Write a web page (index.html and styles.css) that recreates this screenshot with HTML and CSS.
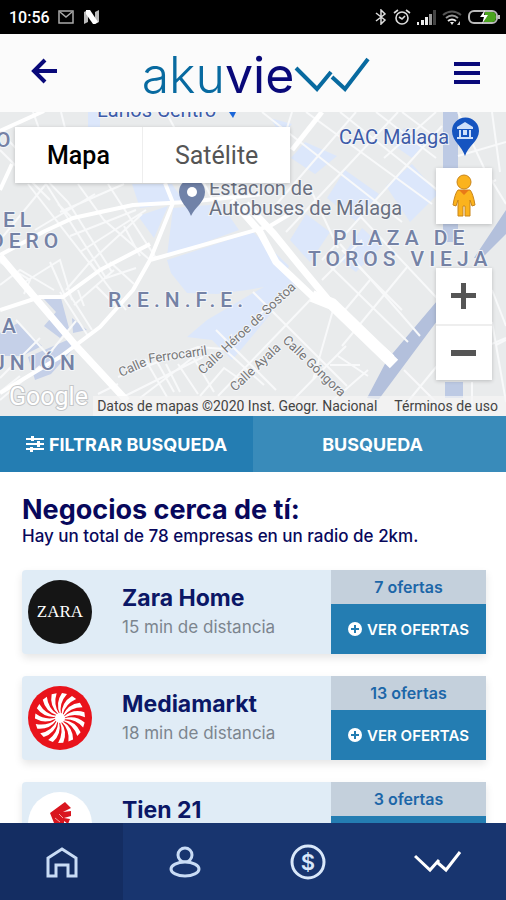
FILE: index.html
```html
<!DOCTYPE html>
<html lang="es">
<head>
    <meta charset="UTF-8">
    <meta name="viewport" content="width=device-width, initial-scale=1.0">
    <title>Akuview</title>
    <link rel="stylesheet" href="styles.css">
</head>
<body>

    <div class="status-bar">
        <span class="time">10:56</span>
        <svg width="16" height="14" viewBox="0 0 16 14" fill="none" stroke="#aaa" stroke-width="1.5"><rect x="1" y="1" width="14" height="12"/><path d="M2 2l6 5 6-5"/></svg>
        <svg class="n-icon" width="17" height="14" viewBox="0 0 17 14"><path d="M1 2l4-2v12l-4 2z" fill="#bbb"/><path d="M12 2l4-2v12l-4 2z" fill="#bbb"/><path d="M3 0h4l8 12-3 2h-2L3 4z" fill="#fff"/></svg>
        <div class="status-icons">
            <svg width="12" height="16" viewBox="0 0 12 16" fill="none" stroke="#ddd" stroke-width="1.5"><path d="M1 4l9 7-4 4V1l4 4-9 7"/></svg>
            <svg width="18" height="16" viewBox="0 0 18 16" fill="none" stroke="#ddd" stroke-width="1.6"><circle cx="9" cy="9" r="6"/><path d="M1 4l4-3M17 4l-4-3M6 8l3 2 3-3"/></svg>
            <svg width="19" height="15" viewBox="0 0 19 15"><path d="M0 12h2v3H0zM4 10h3v5H4zM8 7h3v8H8z" fill="#eee"/><path d="M12 4h3v11h-3z" fill="#999"/><path d="M16 0h3v15h-3z" fill="#444"/></svg>
            <svg width="20" height="15" viewBox="0 0 20 15" fill="none" stroke-width="2"><path d="M1 5q9-7 18 0" stroke="#555"/><path d="M4 8q6-5 12 0" stroke="#999"/><path d="M6 11q4-3 8 0" stroke="#eee"/><path d="M8 12h4l-2 3z" fill="#eee"/><path d="M18 11v4h-3z" fill="#ccc"/></svg>
            <svg width="32" height="16" viewBox="0 0 32 16"><rect x="1" y="2" width="28" height="12" rx="5" fill="none" stroke="#bbb" stroke-width="2"/><path d="M17 3h7q4 0 4 5t-4 5h-8z" fill="#4aa51e"/><path d="M17 1l-5 7h4l-2 7 6-9h-4z" fill="#fff"/><path d="M30 6h2v4h-2z" fill="#bbb"/></svg>
        </div>
    </div>

    <header class="header">
        <button class="icon-button" aria-label="Volver">
            <svg width="28" height="30" viewBox="0 0 28 30" fill="none" stroke="#090979" stroke-width="4"><path d="M27 13H4M15 2L4 13l11 11"/></svg>
        </button>
        <a class="logo" href="#" aria-label="Akuview">
            <span class="logo-aku">aku</span><span class="logo-vie">vie</span>
            <svg width="76" height="36" viewBox="0 0 76 36" fill="none" stroke="#086aa0" stroke-width="4"><path d="M2 11l21 21 14-17M38 20l13 12L74 2"/></svg>
        </a>
        <button class="icon-button" aria-label="Menú">
            <svg width="26" height="24" viewBox="0 0 26 24" stroke="#090979" stroke-width="4"><path d="M0 3h26M0 12h26M0 21h26"/></svg>
        </button>
    </header>

    <section class="map">
        <svg class="map-canvas" viewBox="0 112 506 304" preserveAspectRatio="xMidYMid slice">
            <rect y="112" width="506" height="304" fill="#e9ebec"/>
            <!-- zones -->
            <g fill="#dce7fb">
                <path d="M132 184h40l12 18-44 6zM138 216l30-10-14 32zM173 208l48-4 18 26-72 26zM167 260l86-28 36 34-8 18-34 6-30 4-30-1-16-20z"/>
                <path d="M187 337l20-17 46-27 32-18 13 6-54 65-12 14-20-20z"/>
                <path d="M305 142l32 14-22 18-24-16zM345 170l34 24-22 28-30-24zM386 186l26-22 26 30-28 28zM306 214l24 18-20 30-20-22zM362 228l20 18-26 26-16-12zM270 118l22 6-10 12zM404 128l22 14-14 16-20-14z"/>
                <path d="M88 112h12v20H88z"/>
            </g>
            <g fill="#c5d0e8">
                <path d="M0 333l18-10 24 23-20 10H0zM43 298h18l8 30-9 10-16-12 12-14zM72 318l15 12-14 3zM28 357l44-19 3 9-24 27-16 6z"/>
                <path d="M443 112h15v130h-15zM445 382h18v16h-18z" fill="#bdcae4"/>
                <path d="M506 210v24l-24 24h-8zM437 301v20l-58 78-12-1 20-38z" fill="#b3c0dc"/>
            </g>
            <!-- small streets -->
            <g class="street">
                <path d="M33 112l8 22M61 112l5 20M8 140l60 62 44 70M0 150l50 50M28 184l70 90M46 184l60 94 30-10M78 184l26 36 46 40M108 184l48 74M60 212l64-28M58 204l14 14M35 230l60-36M70 236l66-26M80 252l66-42M88 264l54-50M0 240l46-56M124 226l16 30"/>
                <path d="M0 262l30 18-6 14M0 285l20-15 34 20M20 285l40-25 12 40M50 262l15 34M66 290l24-28 36 48M74 305l40-35M84 306l-6-16M96 286l20 20M110 262l24 22M60 292l28 44M68 292l24 38M16 320l32 35 28-34M40 338l-40 40M0 400l40-34M0 392l20-16"/>
                <path d="M98 394l20-10M118 377l80-30 26 2 40 36M123 397l80-40M145 359l22 38M156 360l18 32M166 364l14 28M178 364l20 30M190 352l24 40M140 398l60-46M200 396l24-28 20 14M216 330l60 60M252 320l36-28M253 292l34 34 60 60M312 298l-94 98M333 310l-20 70M346 346l-55 56M368 370l-46 40M338 356l30 20M360 365h-30"/>
                <path d="M166 112l48 90M262 112l140 110M306 112l126 92M340 112l100 80M376 112l60 46M268 214l88-102M286 232l112-120M322 260l120-134M310 188l28 60M360 216l90 96M340 244l80 92M292 112l-10 32-36 30M402 112l32 24M436 112l-52 46"/>
                <path d="M342 250l60 60M330 266l78 76M370 280l-30 36M408 266l-66 80M322 280l40-40M458 112l26 56 22 36M492 112l8 60M458 156l48-14M496 180l-40 20M492 290l14 36M437 366l-36 44M404 370l40 40M440 366l66-28M472 382v30M492 322l14 80M496 345l10-5"/>
            </g>
            <!-- main roads -->
            <g class="road">
                <path d="M0 131l44-20M0 255l45-24 28-13 60-13 54-3 75-8M150 260l23-57-8-20M150 260l-17 30-33 37-40 30-60 36M150 260l120-34 30-18M0 310l40-13h23l37-27 50-26M0 190l12-26" stroke-width="4"/>
                <path d="M292 150l30-38"/>
                <path d="M0 256l37 44 40 47 50 54" stroke-width="7"/>
                <path d="M232 200l28 32 16 30 36 34 20 8 58 54" stroke-width="7"/>
                <path d="M246 204l28 30 26 32 30 36 62 56" stroke-width="7"/>
                <path d="M312 296l20 8 62 60" stroke-width="12"/>
            </g>
            <!-- labels -->
            <g class="district">
                <text x="-4" y="147">O</text>
                <text x="3" y="227">EL</text>
                <text x="-10" y="248">DERO</text>
                <text x="2" y="333">A</text>
                <text x="-9" y="370">UNIÓN</text>
                <text x="108" y="307">R.E.N.F.E.</text>
                <text x="333" y="245">PLAZA DE</text>
                <text x="308" y="266">TOROS VIEJA</text>
            </g>
            <g class="place">
                <text x="97" y="117" class="blue">Larios Centro</text>
                <path d="M229 112h7l-3 6z" fill="#1a66d8"/>
                <text x="209" y="195">Estación de</text>
                <text x="209" y="215">Autobuses de Málaga</text>
                <text x="339" y="144" class="blue">CAC Málaga</text>
            </g>
            <path d="M191 216c-3-9-12-14-12-24a13 13 0 0 1 26 0c0 10-10 15-14 24z" fill="#7082a8"/>
            <circle cx="192" cy="192" r="5" fill="#fff"/>
            <path d="M465 156c-3-10-13-15-13-25a13 13 0 0 1 27 0c0 10-11 15-14 25z" fill="#1554c0"/>
            <path d="M457 127l8-5 8 5v2h-16zM459 130h2v7h-2zM469 130h2v7h-2zM457 137h16v2h-16zM463 130h4v5h-4z" fill="#cfe0fa"/>
            <g class="street-name">
                <text transform="translate(121 377) rotate(-24)">Calle</text>
                <text transform="translate(149 363) rotate(-8)">Ferrocarril</text>
                <text transform="translate(203 375) rotate(-43)">Calle Héroe de Sostoa</text>
                <text transform="translate(235 392) rotate(-43)">Calle Ayala</text>
                <text transform="translate(282 341) rotate(44)">Calle Góngora</text>
            </g>
            <text x="9" y="405" class="google">Google</text>
        </svg>
        <div class="map-type">
            <button class="active">Mapa</button>
            <button>Satélite</button>
        </div>
        <div class="map-tools">
            <button class="pegman" aria-label="Street View">
                <svg width="24" height="44" viewBox="0 0 24 44" fill="#fbb31d" stroke="#c9851a" stroke-width="1"><path d="M6 16h12q3 3 5 15l-3 1-2-6v16h-5V32h-2v10H6V26l-2 6-3-1q2-12 5-15z"/><circle cx="12" cy="8" r="7"/><path d="M7 16h10l-5 5z" fill="#e87918" stroke="none"/></svg>
            </button>
            <div class="zoom">
                <button aria-label="Acercar"><svg width="26" height="26" viewBox="0 0 26 26"><path d="M10 0h5v10h10v5H15v11h-5V15H0v-5h10z" fill="#555"/></svg></button>
                <button aria-label="Alejar"><svg width="26" height="6" viewBox="0 0 26 6"><path d="M0 0h25v6H0z" fill="#555"/></svg></button>
            </div>
        </div>
        <div class="attribution">
            <span>Datos de mapas ©2020 Inst. Geogr. Nacional</span>
            <a href="#">Términos de uso</a>
        </div>
    </section>

    <div class="tabs">
        <button class="tab selected">
            <svg width="18" height="16" viewBox="0 0 18 16" fill="#fff"><path d="M0 2h18v2H0zM0 7h18v2H0zM0 12h18v2H0zM5 0h3v5H5zM11 5h3v6h-3zM4 11h3v5H4z"/></svg>
            FILTRAR BUSQUEDA
        </button>
        <button class="tab">BUSQUEDA</button>
    </div>

    <main class="content">
        <h1>Negocios cerca de tí:</h1>
        <p class="summary">Hay un total de 78 empresas en un radio de 2km.</p>

        <article class="card">
            <div class="brand zara">ZARA</div>
            <div class="info">
                <h2>Zara Home</h2>
                <p>15 min de distancia</p>
            </div>
            <div class="offers">
                <span>7 ofertas</span>
                <button>
                    <svg width="14" height="14" viewBox="0 0 14 14"><circle cx="7" cy="7" r="7" fill="#fff"/><path d="M7 3v8M3 7h8" stroke="#247db2" stroke-width="2"/></svg>
                    VER OFERTAS
                </button>
            </div>
        </article>

        <article class="card">
            <div class="brand mediamarkt">
                <svg width="64" height="64" viewBox="-32 -32 64 64" fill="#fff">
                    <defs>
                        <path id="ray" d="M0 -4Q-5 -15 2 -25L7 -24Q-1 -15 1 -4z"/>
                        <g id="rays">
                            <use href="#ray"/>
                            <use href="#ray" transform="rotate(24)"/>
                            <use href="#ray" transform="rotate(48)"/>
                            <use href="#ray" transform="rotate(72)"/>
                            <use href="#ray" transform="rotate(96)"/>
                        </g>
                    </defs>
                    <use href="#rays"/>
                    <use href="#rays" transform="rotate(120)"/>
                    <use href="#rays" transform="rotate(240)"/>
                    <circle r="5"/>
                </svg>
            </div>
            <div class="info">
                <h2>Mediamarkt</h2>
                <p>18 min de distancia</p>
            </div>
            <div class="offers">
                <span>13 ofertas</span>
                <button>
                    <svg width="14" height="14" viewBox="0 0 14 14"><circle cx="7" cy="7" r="7" fill="#fff"/><path d="M7 3v8M3 7h8" stroke="#247db2" stroke-width="2"/></svg>
                    VER OFERTAS
                </button>
            </div>
        </article>

        <article class="card">
            <div class="brand tien">
                <svg width="64" height="64" viewBox="0 0 64 64" fill="#d9161f"><path d="M22 21l15-11 6 6-8 4 8-1v5l-7 2 6 1-2 5-4-3v14H26V31z"/><path d="M27 26l5 4M31 22l4 4" stroke="#f3a0a0"/></svg>
            </div>
            <div class="info">
                <h2>Tien 21</h2>
            </div>
            <div class="offers">
                <span>3 ofertas</span>
                <button aria-label="Ver ofertas"></button>
            </div>
        </article>
    </main>

    <nav class="bottom-nav">
        <a class="current" href="#" aria-label="Inicio">
            <svg width="32" height="32" viewBox="0 0 32 32" fill="none" stroke="#c9dcf5" stroke-width="3"><path d="M2 30V12L16 3l14 9v18h-8V19H10v11z"/></svg>
        </a>
        <a href="#" aria-label="Perfil">
            <svg width="32" height="32" viewBox="0 0 32 32" fill="none" stroke="#c9dcf5" stroke-width="3"><circle cx="16" cy="9" r="7"/><ellipse cx="16" cy="23" rx="14" ry="7" fill="#18356f"/></svg>
        </a>
        <a href="#" aria-label="Ofertas">
            <svg width="36" height="36" viewBox="0 0 36 36"><circle cx="18" cy="18" r="16" fill="none" stroke="#d9e8fa" stroke-width="3"/><text x="18" y="26" text-anchor="middle" class="dollar">$</text></svg>
        </a>
        <a href="#" aria-label="Akuview">
            <svg width="48" height="24" viewBox="0 0 48 24" fill="none" stroke="#fff" stroke-width="3"><path d="M1 6l15 14 9-10M24 13l8 7L46 2"/></svg>
        </a>
    </nav>

</body>
</html>
```
FILE: styles.css
```css
* {
    box-sizing: border-box;
}

body {
    margin: 0;
    height: 100vh;
    display: flex;
    flex-direction: column;
    overflow: hidden;
    background-color: #fff;
    font-family: Inter, sans-serif;
    color: #08085c;
}

button {
    border: none;
    padding: 0;
    background: none;
    font-family: inherit;
    cursor: pointer;
}

svg {
    display: block;
    flex: none;
}

/* status bar */
.status-bar {
    flex: none;
    height: 34px;
    padding: 0 6px 0 9px;
    display: flex;
    align-items: center;
    background-color: #000;
    color: #fff;
    font-family: Roboto, sans-serif;
}

.time {
    margin-right: 8px;
    font-size: 16px;
    font-weight: 500;
}

.n-icon {
    margin-left: 9px;
}

.status-icons {
    margin-left: auto;
    display: flex;
    align-items: center;
    gap: 6px;
}

/* header */
.header {
    flex: none;
    height: 78px;
    padding: 0 26px 0 30px;
    display: flex;
    align-items: center;
    justify-content: space-between;
    background-color: #fbfbfb;
}

.logo {
    padding-top: 4px;
    display: flex;
    align-items: center;
    font-size: 50px;
    line-height: 50px;
    font-weight: 300;
    text-decoration: none;
}

.logo-aku {
    color: #086aa0;
}

.logo-vie {
    color: #090979;
    font-weight: 400;
}

/* map */
.map {
    position: relative;
    flex: none;
    height: 304px;
    overflow: hidden;
    font-family: Roboto, sans-serif;
}

.map-canvas {
    width: 100%;
    height: 100%;
}

.street {
    fill: none;
    stroke: #f8f9fa;
    stroke-width: 2;
}

.road {
    fill: none;
    stroke: #fff;
    stroke-width: 5;
    stroke-linejoin: round;
}

.district {
    font-size: 21px;
    font-weight: 500;
    letter-spacing: 5px;
    fill: #7582a5;
}

.place {
    font-size: 20px;
    fill: #6a7080;
}

.place text,
.street-name,
.district {
    stroke: #f3f5f8;
    stroke-width: 2px;
    paint-order: stroke;
}

.place .blue {
    fill: #3d5ba8;
}

.street-name {
    font-size: 13px;
    fill: #777;
}

.google {
    font-size: 25px;
    font-weight: 400;
    fill: #fff;
    stroke: #c4c6c8;
    stroke-width: 2px;
    paint-order: stroke;
}

.map-type {
    position: absolute;
    top: 15px;
    left: 15px;
    display: flex;
    background-color: #fff;
    box-shadow: 0 1px 4px rgba(0, 0, 0, 0.2);
}

.map-type button {
    height: 56px;
    padding: 0 32px;
    font-size: 25px;
    color: #555;
}

.map-type .active {
    color: #000;
    font-weight: 500;
    border-right: 1px solid #eee;
}

.map-tools {
    position: absolute;
    top: 56px;
    right: 14px;
    display: grid;
    gap: 44px;
}

.map-tools button {
    width: 56px;
    height: 56px;
    display: flex;
    align-items: center;
    justify-content: center;
}

.pegman,
.zoom {
    background-color: #fff;
    box-shadow: 0 1px 4px rgba(0, 0, 0, 0.2);
}

.zoom button + button {
    border-top: 2px solid #eee;
}

.attribution {
    position: absolute;
    right: 0;
    bottom: 0;
    height: 20px;
    padding: 0 8px 0 4px;
    display: flex;
    align-items: center;
    gap: 17px;
    background-color: rgba(245, 245, 245, 0.7);
    font-size: 14px;
    white-space: nowrap;
    color: #444;
}

.attribution a {
    color: #444;
    text-decoration: none;
}

/* tabs */
.tabs {
    flex: none;
    display: grid;
    grid-template-columns: 1fr 1fr;
}

.tab {
    height: 56px;
    padding: 0 14px 0 0;
    display: flex;
    align-items: center;
    justify-content: center;
    gap: 5px;
    background-color: #398bba;
    color: #fff;
    font-size: 18px;
    font-weight: bold;
    white-space: nowrap;
}

.tab.selected {
    padding: 0;
    background-color: #247db2;
}

/* content */
.content {
    flex: 1;
    min-height: 0;
    padding: 22px 20px 0 22px;
    overflow-y: auto;
    scrollbar-width: none;
}

h1 {
    margin: 0;
    font-size: 27px;
    line-height: 32px;
    font-weight: bold;
}

.summary {
    margin: 0 0 24px;
    font-size: 17px;
    line-height: 20px;
    font-weight: 500;
}

.card {
    height: 84px;
    margin-bottom: 22px;
    padding-left: 6px;
    display: flex;
    align-items: center;
    background-color: #e0ecf6;
    border-radius: 4px 0 0 4px;
    box-shadow: 0 4px 8px rgba(0, 0, 0, 0.1);
}

.brand {
    flex: none;
    width: 64px;
    height: 64px;
    margin-right: 30px;
    display: flex;
    align-items: center;
    justify-content: center;
    border-radius: 50%;
    overflow: hidden;
    background-color: #fff;
}

.zara {
    background-color: #151515;
    color: #fff;
    font-family: "Liberation Serif", serif;
    font-size: 17px;
}

.mediamarkt {
    background-color: #e9131b;
}

.info {
    flex: 1;
    min-width: 0;
    height: 56px;
}

.info h2 {
    margin: 0;
    font-size: 23px;
    line-height: 28px;
    font-weight: bold;
    color: #0b1766;
}

.info p {
    margin: 0;
    font-size: 17px;
    line-height: 30px;
    color: #7c858e;
    font-weight: 400;
}

.offers {
    flex: none;
    width: 155px;
    height: 100%;
    display: flex;
    flex-direction: column;
}

.offers span {
    height: 34px;
    background-color: #c4d0dc;
    color: #1c66a8;
    font-size: 16px;
    font-weight: 600;
    line-height: 34px;
    text-align: center;
}

.offers button {
    flex: 1;
    display: flex;
    align-items: center;
    justify-content: center;
    gap: 5px;
    background-color: #247db2;
    color: #fff;
    font-size: 15px;
    font-weight: 600;
    white-space: nowrap;
}

/* bottom navigation */
.bottom-nav {
    flex: none;
    height: 77px;
    display: grid;
    grid-template-columns: 9fr 9fr 9fr 10fr;
    background-color: #18356f;
}

.bottom-nav a {
    display: flex;
    align-items: center;
    justify-content: center;
}

.bottom-nav .current {
    background-color: #142d62;
}

.dollar {
    font-size: 22px;
    font-weight: 600;
    fill: #d9e8fa;
}
```
